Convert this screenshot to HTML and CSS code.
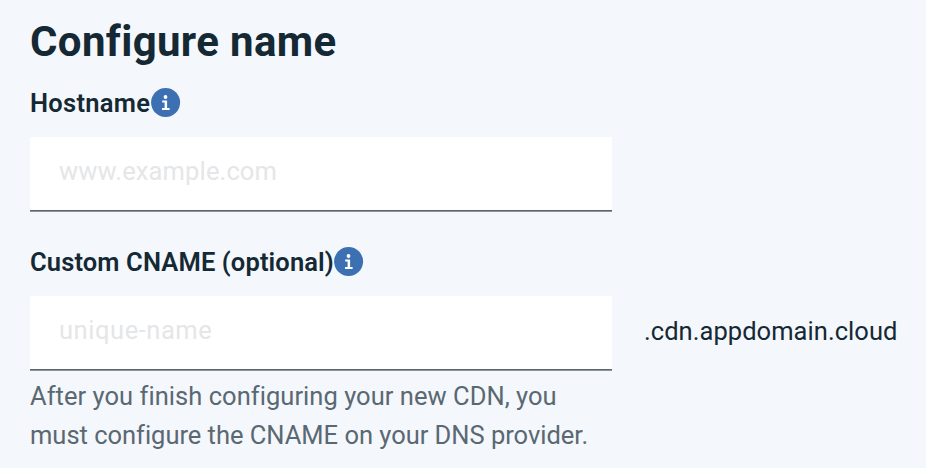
FILE: index.html
```html
<!DOCTYPE html>
<html lang="en">
<head>
<meta charset="utf-8">
<title>Configure name</title>
<link rel="stylesheet" href="styles.css">
</head>
<body>
<main class="panel">
  <h1 class="title">Configure name</h1>
  <div class="label-row">
    <label class="label label-host" for="host">Hostname</label>
    <svg class="info" viewBox="0 0 30 30" aria-hidden="true"><circle cx="14.6" cy="14.6" r="14.5"/><circle class="mark" cx="14.5" cy="9" r="1.9"/><path class="mark" d="M11.2 12.4h4.9v7.5h2.5v2h-7.6v-2h2.6v-5.5h-2.4z"/></svg>
  </div>
  <input class="field field-host" id="host" placeholder="www.example.com">
  <div class="label-row">
    <label class="label label-cname" for="cname">Custom CNAME (optional)</label>
    <svg class="info" viewBox="0 0 30 30" aria-hidden="true"><circle cx="14.6" cy="14.6" r="14.5"/><circle class="mark" cx="14.5" cy="9" r="1.9"/><path class="mark" d="M11.2 12.4h4.9v7.5h2.5v2h-7.6v-2h2.6v-5.5h-2.4z"/></svg>
  </div>
  <div class="field-row">
    <input class="field field-cname" id="cname" placeholder="unique-name">
    <span class="suffix">.cdn.appdomain.cloud</span>
  </div>
  <p class="help"><span class="line-one">After you finish configuring your new CDN, you</span><br><span class="line-two">must configure the CNAME on your DNS provider.</span></p>
</main>
</body>
</html>
```
FILE: styles.css
```css
* { box-sizing: border-box; }
body { margin: 0; background: #f4f7fc; color: #152934; font-family: Roboto, sans-serif; }
.panel { height: 468px; padding: 15px 28px 0 30px; overflow: hidden; white-space: nowrap; }
.title { margin: 0; height: 53px; font-size: 42px; line-height: 53px; font-weight: 700; letter-spacing: 0.35px; }
.label-row { display: flex; align-items: center; height: 30px; margin-top: 20px; }
.label { font-size: 25.5px; line-height: 30px; font-weight: 600; }
.label-host { width: 121px; letter-spacing: 0.28px; }
.label-cname { width: 304px; letter-spacing: 0.13px; }
.info { width: 30px; height: 30px; flex: none; fill: #3d70b2; }
.info .mark { fill: #fff; }
.field { display: block; flex: none; width: 582px; height: 75px; margin: 0; padding: 0 29px 6px; border: 0; border-bottom: 1px solid #8b949d; border-radius: 0; background: #fff; box-shadow: inset 0 -1px #5a6872; font: 25.5px Roboto, sans-serif; }
.field::placeholder { color: #e4e6e8; opacity: 1; }
.field-host { margin-top: 19px; margin-bottom: 35px; letter-spacing: 0.13px; }
.field-cname { letter-spacing: 0.55px; }
.field-row { display: flex; align-items: center; margin-top: 19px; }
.suffix { margin-left: 32px; padding-bottom: 5px; font-size: 25.5px; letter-spacing: 0.05px; }
.help { margin: 6px 0 0; color: #5a6872; font-size: 25.5px; line-height: 39px; }
.line-one { letter-spacing: 0.04px; }
.line-two { letter-spacing: -0.02px; }
```
